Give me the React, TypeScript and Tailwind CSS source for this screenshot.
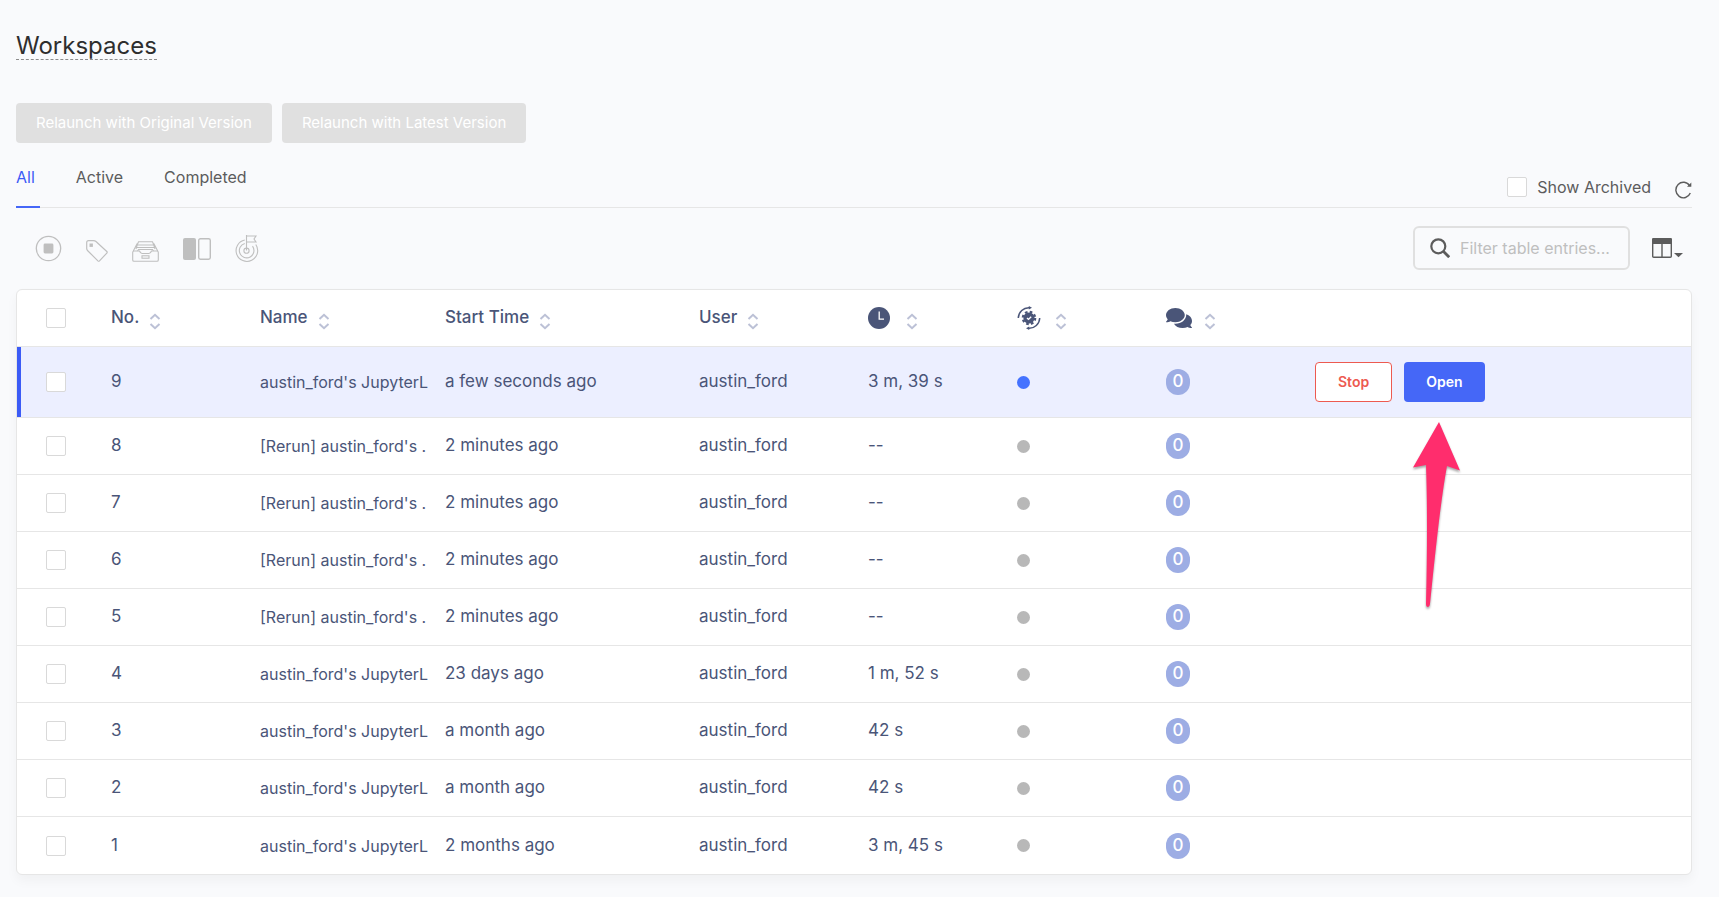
import { useState } from "react";
import { FaComments } from "react-icons/fa";

interface Workspace {
  no: number;
  name: string;
  startTime: string;
  user: string;
  duration: string;
  active?: boolean;
  comments: number;
}

const workspaces: Workspace[] = [
  { no: 9, name: "austin_ford's JupyterL", startTime: "a few seconds ago", user: "austin_ford", duration: "3 m, 39 s", active: true, comments: 0 },
  { no: 8, name: "[Rerun] austin_ford's .", startTime: "2 minutes ago", user: "austin_ford", duration: "--", comments: 0 },
  { no: 7, name: "[Rerun] austin_ford's .", startTime: "2 minutes ago", user: "austin_ford", duration: "--", comments: 0 },
  { no: 6, name: "[Rerun] austin_ford's .", startTime: "2 minutes ago", user: "austin_ford", duration: "--", comments: 0 },
  { no: 5, name: "[Rerun] austin_ford's .", startTime: "2 minutes ago", user: "austin_ford", duration: "--", comments: 0 },
  { no: 4, name: "austin_ford's JupyterL", startTime: "23 days ago", user: "austin_ford", duration: "1 m, 52 s", comments: 0 },
  { no: 3, name: "austin_ford's JupyterL", startTime: "a month ago", user: "austin_ford", duration: "42 s", comments: 0 },
  { no: 2, name: "austin_ford's JupyterL", startTime: "a month ago", user: "austin_ford", duration: "42 s", comments: 0 },
  { no: 1, name: "austin_ford's JupyterL", startTime: "2 months ago", user: "austin_ford", duration: "3 m, 45 s", comments: 0 },
];

const tabs = ["All", "Active", "Completed"];

function Checkbox({ id, label }: { id?: string; label?: string }) {
  return (
    <input
      type="checkbox"
      id={id}
      aria-label={label}
      className="block size-5 shrink-0 appearance-none rounded-xs border border-[#d9d9d9] bg-white checked:bg-[#4567f7]"
    />
  );
}

function SortIcon() {
  return (
    <svg width="12" height="17" viewBox="0 0 12 17" fill="none" stroke="#bcc1d6" strokeWidth="2" aria-hidden="true">
      <path d="M1.5 6 6 1.8 10.5 6M1.5 11 6 15.2 10.5 11" />
    </svg>
  );
}

function StopIcon() {
  return (
    <svg width="28" height="28" viewBox="0 0 28 28" aria-hidden="true">
      <circle cx="14.5" cy="14.5" r="12.2" fill="none" stroke="#bfbfbf" strokeWidth="1.3" />
      <rect x="9.6" y="9.6" width="9.8" height="9.8" rx="1.4" fill="#bfbfbf" />
    </svg>
  );
}

function TagIcon() {
  return (
    <svg width="22" height="22" viewBox="0 0 22 22" fill="none" stroke="#bfbfbf" strokeWidth="1.2" aria-hidden="true">
      <path d="M.7 2.5Q.7.7 2.5.7H7.500Q9 .7 10 1.5L20.8 11.5Q21.6 12.3 20.8 13.1L13.5 20.9Q12.7 21.6 11.9 20.9L1.5 10.5Q.7 9.700.7 8.500Z" />
      <rect x="3.5" y="3.5" width="3.4" height="3.4" fill="#bfbfbf" stroke="none" />
    </svg>
  );
}

function ArchiveIcon() {
  return (
    <svg width="27" height="22" viewBox="0 0 27 22" fill="none" stroke="#bfbfbf" strokeWidth="1.1" aria-hidden="true">
      <path d="M.7 12.5V20Q.7 21.3 2 21.3H25Q26.3 21.3 26.3 20V12.5Q26.3 11 25 11H19.5Q18.5 13.5 17 13.5H10Q8.5 13.5 7.5 11H2Q.7 11 .7 12.5Z" />
      <path d="M1.3 11 5.2 3.5M25.7 11 21.8 3.5M6.5 1.7H20.5L21.8 5H5.2ZM5.2 5 4 9M21.8 5 23 9M5 7.5H22M5.5 11 6.5 9.5H20.5L21.5 11" />
      <rect x="10" y="15.8" width="7" height="2.4" />
    </svg>
  );
}

function CompareIcon() {
  return (
    <svg width="28" height="22" viewBox="0 0 28 22" className="mb-0.5" aria-hidden="true">
      <rect width="13" height="22" rx="2" fill="#bfbfbf" />
      <rect x="15.7" y="0.7" width="11.6" height="20.6" rx="1.7" fill="none" stroke="#bfbfbf" strokeWidth="1.4" />
    </svg>
  );
}

function GoalIcon() {
  return (
    <svg width="24" height="28" viewBox="0 0 24 28" fill="none" stroke="#bfbfbf" strokeWidth="1.1" aria-hidden="true">
      <path d="M9.8 6A10.8 10.8 0 1 0 20.8 10.5M9.8 9.5A7.3 7.3 0 1 0 17.5 12.2" />
      <circle cx="11.5" cy="16.7" r="2.6" />
      <path d="M11.5 16.5V1M11.5 2H21L19 5 21 8H11.5" />
    </svg>
  );
}

function ClockIcon() {
  return (
    <svg width="22" height="22" viewBox="0 0 22 22" aria-hidden="true">
      <circle cx="11" cy="11" r="11" fill="#4a5578" />
      <path d="M11.2 4.5V12.2H16" fill="none" stroke="#fff" strokeWidth="1.3" />
    </svg>
  );
}

function StatusIcon() {
  return (
    <svg width="24" height="24" viewBox="0 0 24 24" fill="none" stroke="#4a5578" strokeWidth="1.5" aria-hidden="true">
      <path d="M1.3 12A10.5 10.5 0 0 1 12.5 1.7M22.7 12A10.5 10.5 0 0 1 11.5 22.3" />
      <path d="M11.8 0 15 1.7 11.8 3.6ZM12.2 20.4 9 22.3 12.2 24Z" fill="#4a5578" stroke="none" />
      <circle cx="12" cy="12" r="6.2" strokeWidth="2.2" strokeDasharray="2.6 2.27" />
      <circle cx="12" cy="12" r="5.6" fill="#4a5578" stroke="none" />
      <path d="M10 12 11.5 13.4 14.2 10.8" stroke="#fff" strokeWidth="1.4" />
    </svg>
  );
}

function SearchIcon() {
  return (
    <svg width="20" height="20" viewBox="0 0 20 20" fill="none" stroke="#5c5c5c" strokeWidth="2.2" aria-hidden="true">
      <circle cx="8.3" cy="8.3" r="7" />
      <path d="m13.3 13.3 5.9 5.9" strokeWidth="2.8" />
    </svg>
  );
}

function RefreshIcon() {
  return (
    <svg width="17" height="18" viewBox="0 0 17 18" fill="none" stroke="#5c5c5c" strokeWidth="1.4" aria-hidden="true">
      <path d="M15.3 12A7.5 7.8 0 1 1 14.7 4.8" />
      <path d="M16.3 1.5V5.8H12Z" fill="#5c5c5c" stroke="none" />
    </svg>
  );
}

function ColumnsIcon() {
  return (
    <svg width="32" height="20" viewBox="0 0 32 20" fill="none" stroke="#5c5c5c" strokeWidth="1.4" aria-hidden="true">
      <rect x="0.7" y="0.7" width="18.6" height="18.6" rx="1" />
      <path d="M10 5V19" />
      <path d="M1 0H19L20 1V6H0V1Z" fill="#5c5c5c" stroke="none" />
      <path d="M22 15H31L26.5 19.3Z" fill="#5c5c5c" stroke="none" />
    </svg>
  );
}

const columns = [
  { key: "no", label: "No.", content: "No.", gap: "gap-[10px]" },
  { key: "name", label: "Name", content: "Name", gap: "gap-[10px]" },
  { key: "start", label: "Start Time", content: "Start Time", gap: "gap-[10px]" },
  { key: "user", label: "User", content: "User", gap: "gap-[10px]" },
  { key: "duration", label: "Duration", content: <ClockIcon />, gap: "gap-4" },
  { key: "status", label: "Status", content: <StatusIcon />, gap: "gap-[14px]" },
  { key: "comments", label: "Comments", content: <FaComments size={26} />, gap: "gap-3" },
];

const tools = [
  { label: "Stop", icon: <StopIcon /> },
  { label: "Tag", icon: <TagIcon /> },
  { label: "Archive", icon: <ArchiveIcon /> },
  { label: "Compare", icon: <CompareIcon /> },
  { label: "Goal", icon: <GoalIcon /> },
];

export default function App() {
  const [tab, setTab] = useState("All");

  return (
    <main className="min-h-screen bg-[#f9fafc] pt-8 pr-[27px] pb-5 pl-4 font-['Inter','Liberation_Sans',sans-serif] text-[#5c5c5c]">
      <h1 className="w-fit border-b border-dashed border-[#8c8c8c] text-2xl leading-[27px] text-[#2e2e2e]">
        Workspaces
      </h1>

      <div className="mt-[43px] flex gap-[10px]">
        <button disabled className="h-10 rounded bg-[#e0e0e0] px-5 text-[15px] text-white">
          Relaunch with Original Version
        </button>
        <button disabled className="h-10 rounded bg-[#e0e0e0] px-5 text-[15px] text-white">
          Relaunch with Latest Version
        </button>
      </div>

      <div className="mt-5 flex items-start justify-between border-b border-[#e6e6e6]">
        <div role="tablist" className="-mb-px flex gap-9">
          {tabs.map(t => (
            <button
              key={t}
              role="tab"
              aria-selected={t === tab}
              onClick={() => setTab(t)}
              className={
                t === tab
                  ? "h-[45px] border-b-2 border-[#4567f7] pr-[5px] pb-4 text-base text-[#3b5bf6]"
                  : "h-[45px] border-b-2 border-transparent pr-[5px] pb-4 text-base"
              }
            >
              {t}
            </button>
          ))}
        </div>
        <div className="mt-3 flex items-center gap-6">
          <label htmlFor="archived" className="flex items-center gap-[10px] text-base">
            <Checkbox id="archived" />
            Show Archived
          </label>
          <button aria-label="Refresh" className="pt-[6px]">
            <RefreshIcon />
          </button>
        </div>
      </div>

      <div className="mt-[18px] flex items-center justify-between pr-2 pl-[18px]">
        <div className="flex items-end gap-6">
          {tools.map(tool => (
            <button key={tool.label} aria-label={tool.label}>
              {tool.icon}
            </button>
          ))}
        </div>
        <div className="flex items-center gap-[22px]">
          <div className="flex h-11 w-[217px] items-center gap-[10px] rounded-md border-2 border-[#e0e0e0] pl-[15px]">
            <SearchIcon />
            <input
              type="search"
              aria-label="Filter table entries"
              placeholder="Filter table entries..."
              className="min-w-0 flex-1 bg-transparent text-base outline-none placeholder:text-[#bfbfbf]"
            />
          </div>
          <button aria-label="Choose columns">
            <ColumnsIcon />
          </button>
        </div>
      </div>

      <div className="relative mt-[19px] rounded-md border border-[#e6e6e6] bg-white shadow-[0_6px_12px_rgba(0,0,0,0.04)]">
        <table className="w-full table-fixed border-separate border-spacing-0 text-left text-[17px] text-[#4a5578]">
          <colgroup>
            <col className="w-[94px]" />
            <col className="w-[149px]" />
            <col className="w-[185px]" />
            <col className="w-[254px]" />
            <col className="w-[169px]" />
            <col className="w-[149px]" />
            <col className="w-[149px]" />
            <col className="w-[149px]" />
            <col />
          </colgroup>
          <thead>
            <tr className="h-[57px]">
              <th className="border-b border-[#e6e6e6] pl-[29px]">
                <Checkbox label="Select all" />
              </th>
              {columns.map(col => (
                <th key={col.key} className="border-b border-[#e6e6e6] font-medium">
                  <button aria-label={`Sort by ${col.label}`} className={`flex items-center ${col.gap}`}>
                    {col.content}
                    <span className="pt-[6px]">
                      <SortIcon />
                    </span>
                  </button>
                </th>
              ))}
              <th className="border-b border-[#e6e6e6]" aria-label="Actions" />
            </tr>
          </thead>
          <tbody>
            {workspaces.map(w => (
              <tr
                key={w.no}
                className={
                  w.active
                    ? "h-[71px] bg-[#ecefff] shadow-[inset_4px_0_0_#3b5bf6] [&>td]:border-b [&>td]:border-[#e6e6e6]"
                    : "h-[57px] [&:not(:last-child)>td]:border-b [&>td]:border-[#e6e6e6]"
                }
              >
                <td className="pl-[29px]">
                  <Checkbox label={`Select workspace ${w.no}`} />
                </td>
                <td>{w.no}</td>
                <td className="pr-3 text-base">
                  <div className="overflow-hidden whitespace-nowrap">{w.name}</div>
                </td>
                <td>{w.startTime}</td>
                <td>{w.user}</td>
                <td>{w.duration}</td>
                <td>
                  <div className={w.active ? "size-[13px] rounded-full bg-[#4472ff]" : "size-[13px] rounded-full bg-[#b8b8b8]"} />
                </td>
                <td>
                  <div className="flex h-[26px] w-6 items-center justify-center rounded-full bg-[#9dade4] font-medium text-white">
                    {w.comments}
                  </div>
                </td>
                <td>
                  {w.active && (
                    <div className="flex gap-3">
                      <button className="h-10 rounded border border-[#ed5a50] bg-white px-[22px] text-sm font-semibold text-[#ed5a50]">
                        Stop
                      </button>
                      <button className="h-10 rounded bg-[#4567f7] px-[22px] text-sm font-semibold text-white">Open</button>
                    </div>
                  )}
                </td>
              </tr>
            ))}
          </tbody>
        </table>

        {/* callout arrow pointing at the Open button */}
        <svg
          width="52"
          height="190"
          viewBox="0 0 52 190"
          aria-hidden="true"
          className="pointer-events-none absolute top-[130px] left-[1394px] drop-shadow-[0_2px_1px_rgba(0,0,0,0.35)]"
        >
          <path
            d="M28 2 49 50.5 36 46Q29 83 19 184Q18.7 187 17 187Q15 187 15 184Q17 100 15 45L2 47.5Z"
            fill="#ff2d6d"
          />
        </svg>
      </div>
    </main>
  );
}
